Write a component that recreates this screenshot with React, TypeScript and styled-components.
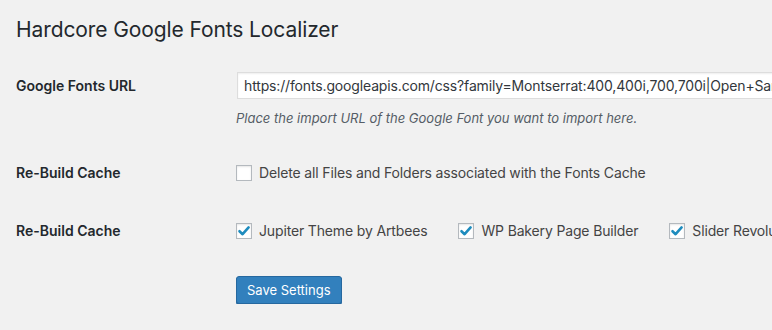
import styled, { createGlobalStyle } from "styled-components";

const GlobalStyle = createGlobalStyle`
  html, body {
    margin: 0;
    padding: 0;
    background: #f1f1f1;
    overflow: hidden;
  }
  body {
    font-family: Inter, "Noto Sans", sans-serif;
    color: #23282d;
  }
`;

const Wrap = styled.div`
  padding: 9px 0 0 16px;
  width: 756px;
`;

const Title = styled.h1`
  margin: 0;
  padding: 6px 0 0;
  font-size: 21px;
  line-height: 29px;
  letter-spacing: -0.1px;
  font-weight: 400;
  color: #23282d;
  white-space: nowrap;
`;

const Row = styled.div<{ $top: number }>`
  display: flex;
  align-items: flex-start;
  margin-top: ${(p) => p.$top}px;
`;

const Label = styled.div<{ $lh: number }>`
  flex: 0 0 220px;
  font-size: 14px;
  font-weight: 600;
  line-height: ${(p) => p.$lh}px;
  color: #23282d;
`;

const Field = styled.div`
  flex: 1;
  min-width: 0;
  display: flex;
  flex-direction: column;
`;

const UrlInput = styled.input`
  box-sizing: border-box;
  width: 600px;
  height: 27px;
  margin: 0 0 0 1px;
  padding: 0 6px;
  border: 1px solid #ddd;
  background: #fff;
  box-shadow: inset 0 1px 2px rgba(0, 0, 0, 0.07);
  font-family: Inter, "Noto Sans", sans-serif;
  font-size: 14px;
  letter-spacing: -0.15px;
  color: #32373c;
  outline: none;
`;

const Description = styled.p`
  margin: 10px 0 0;
  font-size: 13px;
  line-height: 18px;
  font-style: italic;
  color: #555d66;
`;

const Checks = styled.div`
  display: flex;
  align-items: center;
  white-space: nowrap;
`;

const CheckLabel = styled.label`
  display: flex;
  align-items: center;
  gap: 7px;
  margin-right: 31px;
  font-size: 14px;
  line-height: 16px;
  letter-spacing: -0.15px;
  color: #444;
  cursor: pointer;
`;

const Box = styled.span`
  box-sizing: border-box;
  flex: 0 0 16px;
  width: 16px;
  height: 16px;
  border: 1px solid #b4b9be;
  background: #fff;
  box-shadow: inset 0 1px 2px rgba(0, 0, 0, 0.1);
  display: flex;
  align-items: center;
  justify-content: center;
`;

const SaveButton = styled.button`
  box-sizing: border-box;
  margin-left: 220px;
  height: 28px;
  padding: 0 10px;
  border: 1px solid #26689f;
  border-radius: 3px;
  background: #3280bd;
  box-shadow: 0 1px 0 #26689f;
  color: #fff;
  font-family: Inter, "Noto Sans", sans-serif;
  font-size: 13px;
  cursor: pointer;
`;

const ButtonRow = styled.div`
  margin-top: 37px;
`;

function Checkbox({ checked, label }: { checked?: boolean; label: string }) {
  return (
    <CheckLabel>
      <Box>
        {checked && (
          <svg width="14" height="14" viewBox="0 0 14 14">
            <path
              d="M2.5 7.2 L5.6 10.2 L11.6 3.4"
              fill="none"
              stroke="#1e8cbe"
              strokeWidth="2.6"
              strokeLinecap="round"
              strokeLinejoin="round"
            />
          </svg>
        )}
      </Box>
      {label}
    </CheckLabel>
  );
}

export default function App() {
  return (
    <Wrap>
      <GlobalStyle />
      <Title>Hardcore Google Fonts Localizer</Title>
      <Row $top={28}>
        <Label $lh={27}>Google Fonts URL</Label>
        <Field>
          <UrlInput
            type="text"
            readOnly
            value="https://fonts.googleapis.com/css?family=Montserrat:400,400i,700,700i|Open+Sans:400,400i,700,700i"
          />
          <Description>
            Place the import URL of the Google Font you want to import here.
          </Description>
        </Field>
      </Row>
      <Row $top={38}>
        <Label $lh={16}>Re-Build Cache</Label>
        <Checks>
          <Checkbox label="Delete all Files and Folders associated with the Fonts Cache" />
        </Checks>
      </Row>
      <Row $top={42}>
        <Label $lh={16}>Re-Build Cache</Label>
        <Checks>
          <Checkbox checked label="Jupiter Theme by Artbees" />
          <Checkbox checked label="WP Bakery Page Builder" />
          <Checkbox checked label="Slider Revolution" />
        </Checks>
      </Row>
      <ButtonRow>
        <SaveButton>Save Settings</SaveButton>
      </ButtonRow>
    </Wrap>
  );
}
